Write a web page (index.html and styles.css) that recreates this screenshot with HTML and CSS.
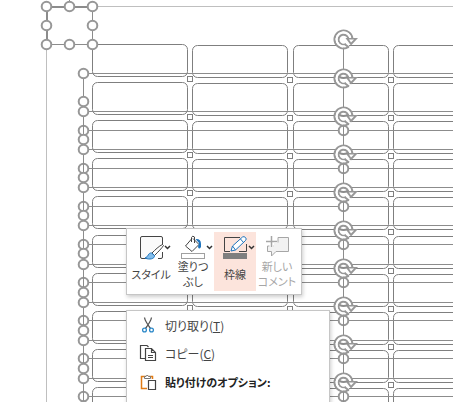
FILE: index.html
```
<!DOCTYPE html>
<html lang="ja">
<head>
  <meta charset="UTF-8">
  <meta name="viewport" content="width=device-width, initial-scale=1">
  <title>スライド</title>
  <link rel="stylesheet" href="styles.css">
</head>
<body>
  <main class="editor">
    <!-- Slide with the selected shapes -->
    <svg class="canvas" id="canvas" aria-hidden="true">
      <defs>
        <circle id="handle" r="4.8" class="handle"/>
        <g id="rotate">
          <circle r="8" fill="#fff"/>
          <path class="rotate-edge" d="M5 7.5 A9 9 0 1 1 9 0"/>
          <path class="rotate-edge" d="M2.5 4.5 A5 5 0 1 1 5 0"/>
          <path class="rotate-gap" d="M4 5.5 A7 7 0 1 1 7 0"/>
          <path class="rotate-head" d="M2 -1.500 H14.500 L7.500 6 Z"/>
          <path class="rotate-tip" d="M5.500 0 H10.500 L7.500 3 Z"/>
          <path class="rotate-edge" d="M1 4.500 L5.500 8"/>
        </g>
      </defs>
      <path class="slide-edge" d="M46.5 2000 V6.5 H3000"/>
    </svg>

    <div class="popup">
      <div class="toolbar" role="toolbar">
        <button type="button" class="tool">
          <svg class="tool-icon" viewBox="0 0 42 28">
            <path class="line" fill="#fafafa" d="M32.5 14 V6 Q32.5 4.5 31 4.5 H12 Q10.5 4.5 10.5 6 V25 Q10.5 26.5 12 26.5 H17 M28 26.5 H31 Q32.5 26.5 32.5 25 V20"/>
            <path fill="#fff" stroke="#444" d="M32.5 12.5 C29 14 25 18 22 21 L24.5 23.5 C28 20 32 16 33.5 13.5 Z"/>
            <path fill="#83beec" stroke="#1e74bd" d="M21.5 21 C18 20.5 18.5 25 15 26 C19 28 25 27 24.5 23.5 Z"/>
            <path class="chevron" d="M35 14 L37.5 16.5 L40 14"/>
          </svg>
          <span class="tool-label">スタイル</span>
        </button>
        <button type="button" class="tool">
          <svg class="tool-icon" viewBox="0 0 42 28">
            <path class="line" fill="#fff" d="M19.5 7 L13.5 14 L20 19.5 L27 12.5 L21 6.5"/>
            <path class="line" fill="none" d="M19.5 10 V5.5 Q20.5 3 22.5 5 V11"/>
            <path fill="#1e74bd" d="M23.5 7 Q29 6.5 29 12 V15 Q27 18 26 15 L27 11 Z"/>
            <rect x="9.5" y="21.5" width="23" height="5" fill="#fff" stroke="#a0a0a0"/>
            <path class="chevron" d="M35 14 L37.5 16.5 L40 14"/>
          </svg>
          <span class="tool-label">塗りつ<br>ぶし</span>
        </button>
        <button type="button" class="tool tool-active">
          <svg class="tool-icon" viewBox="0 0 42 28">
            <path fill="none" stroke="#444" d="M26 5.5 H10.5 V19.5 H16 M25 19.5 H32.5 V12"/>
            <path fill="#fff" stroke="#1e74bd" d="M17 19 L18.5 14 L28.5 5 Q30 4 31.5 5.5 Q33 7 31.5 8.5 L21.5 18 Z M26.5 7 L29.5 10.5 M18.5 14 L21.5 18"/>
            <rect x="9" y="21" width="24" height="6" fill="#7f7f7f"/>
            <path class="chevron" d="M35 14 L37.5 16.5 L40 14"/>
          </svg>
          <span class="tool-label">枠線</span>
        </button>
        <button type="button" class="tool" disabled>
          <svg class="tool-icon" viewBox="0 0 42 28">
            <path fill="#f2f2f2" stroke="#a6a6a6" d="M22 5.5 H32.5 V19.5 H20 L15.5 24 V19.5 H11.5 V14 H22 Z"/>
            <path fill="none" stroke="#fff" stroke-width="4" d="M15.5 4 V15 M10 9.5 H21"/>
            <path fill="none" stroke="#a6a6a6" stroke-width="1.5" d="M15.5 4 V15 M10 9.5 H21"/>
            <path fill="#f2f2f2" d="M18 10.5 H23 V15 H18 Z"/>
          </svg>
          <span class="tool-label">新しい<br>コメント</span>
        </button>
      </div>

      <div class="menu">
        <button type="button" class="menu-item">
          <svg class="menu-icon" viewBox="0 0 18 18">
            <path fill="none" stroke="#555" stroke-width="1.3" d="M5.5 1.5 Q6 5 11.5 12.5 M12.5 1.5 Q12 5 6.5 12.5"/>
            <circle cx="5.5" cy="14" r="1.9" fill="#fff" stroke="#2b88c8" stroke-width="1.3"/>
            <circle cx="12.5" cy="14" r="1.9" fill="#fff" stroke="#2b88c8" stroke-width="1.3"/>
          </svg>
          <span>切り取り(<u>T</u>)</span>
        </button>
        <button type="button" class="menu-item">
          <svg class="menu-icon" viewBox="0 0 18 18">
            <path fill="none" stroke="#444" stroke-width="1.2" d="M6 14.5 H1.5 V1.5 H8 L9.5 3"/>
            <path fill="#fff" stroke="#444" stroke-width="1.2" d="M6.5 4.5 H12.5 L16.5 8.5 V16.5 H6.5 Z M12.5 4.5 V8.5 H16.5 M9 11.5 H14 M9 13.5 H14"/>
          </svg>
          <span>コピー(<u>C</u>)</span>
        </button>
        <div class="menu-item menu-heading">
          <svg class="menu-icon" viewBox="0 0 18 18">
            <path fill="#fff" stroke="#e07b16" stroke-width="1.5" d="M8 15.5 H2.5 V3.5 H13.5 V6"/>
            <path fill="#fff" stroke="#777" d="M5.5 5.5 V3.5 H7 Q8 .5 9.5 3.5 H11.5 V5.5 Z"/>
            <path fill="#fff" stroke="#444" stroke-width="1.2" d="M9.5 7.5 H16.5 V16.5 H9.5 Z"/>
          </svg>
          <span>貼り付けのオプション:</span>
        </div>
      </div>
    </div>
  </main>

  <script src="canvas.js"></script>
</body>
</html>
```
FILE: styles.css
```
body {
  margin: 0;
  background: #fff;
  font-family: "Noto Sans CJK JP", sans-serif;
  font-size: 12px;
  color: #444;
}

.editor {
  position: relative;
  height: 100vh;
  overflow: hidden;
}

/* Slide */
.canvas {
  display: block;
  width: 100%;
  height: 100%;
}
.slide-edge {
  fill: none;
  stroke: #bfbfbf;
}
.card {
  fill: none;
  stroke: #7f7f7f;
}
.cell {
  fill: #fff;
  stroke: #7f7f7f;
}
.guide {
  fill: none;
  stroke: #8c8c8c;
}
.frame {
  fill: none;
  stroke: #8c8c8c;
  stroke-width: 2;
}
.handle {
  fill: #fff;
  stroke: #979797;
  stroke-width: 2;
}
.rotate-edge {
  fill: none;
  stroke: #979797;
  stroke-width: 2;
}
.rotate-gap {
  fill: none;
  stroke: #fff;
  stroke-width: 2;
}
.rotate-head {
  fill: #979797;
}
.rotate-tip {
  fill: #fff;
}

/* Floating toolbar and context menu */
.popup {
  position: absolute;
  top: 228px;
  left: 126px;
  display: flex;
  flex-direction: column;
  align-items: flex-start;
  gap: 15px;
}
.toolbar,
.menu {
  box-sizing: border-box;
  background: #fff;
  border: 1px solid #c6c6c6;
  box-shadow: 1px 2px 4px rgba(0, 0, 0, 0.2);
}
.toolbar {
  display: flex;
  padding: 3px;
}
.tool {
  display: flex;
  flex-direction: column;
  align-items: center;
  width: 42px;
  height: 59px;
  padding: 0;
  border: none;
  background: none;
  font: inherit;
  font-size: 11px;
  line-height: 15px;
  font-feature-settings: "palt";
  color: inherit;
}
.tool-active {
  background: #fce4dc;
}
.tool:disabled {
  color: #a6a6a6;
}
.tool-icon {
  flex: none;
  width: 42px;
  height: 28px;
}
.tool-label {
  display: flex;
  align-items: center;
  height: 28px;
  white-space: nowrap;
}
.line {
  stroke: #444;
}
.chevron {
  fill: none;
  stroke: #333;
  stroke-width: 1.5;
}

.menu {
  width: 204px;
  min-height: 200px;
}
.menu-item {
  display: flex;
  align-items: center;
  gap: 8px;
  width: 100%;
  height: 28px;
  padding: 0 12px;
  border: none;
  background: none;
  box-sizing: border-box;
  font: inherit;
  font-feature-settings: "palt";
  color: inherit;
}
.menu-heading {
  height: 30px;
  font-size: 11px;
  font-weight: bold;
  color: #222;
}
.menu-icon {
  flex: none;
  width: 18px;
  height: 18px;
}
```
FILE: canvas.js
```
const canvas = document.getElementById('canvas');
const pitch = 38.1;
const rows = 30;
const columns = 20;

function add(name, attrs) {
  const el = document.createElementNS('http://www.w3.org/2000/svg', name);
  for (const key in attrs) el.setAttribute(key, attrs[key]);
  canvas.appendChild(el);
}

function place(id, x, y) {
  add('use', { href: '#' + id, x: x + 0.5, y: y + 0.5 });
}

function rowY(start, row) {
  return Math.round(start + row * pitch);
}

// Label cards and the small cells between them
for (let row = 0; row < rows; row++) {
  for (let col = 0; col < columns; col++) {
    const x = Math.round(92 + col * 100.4);
    const y = rowY(44, row) + (col > 0 ? 1 : 0);
    add('rect', { class: 'card', x: x + 0.5, y: y + 0.5, width: 95, height: 32, rx: 5 });
    add('rect', { class: 'cell', x: x + 95.5, y: y + 32.5, width: 5, height: 5 });
  }
}

// Group outlines
for (let row = 0; row < rows; row++) {
  [rowY(73, row), rowY(129.5, row)].forEach(y => {
    add('line', { class: 'guide', x1: 83, x2: '100%', y1: y + 0.5, y2: y + 0.5 });
  });
  place('handle', 83, rowY(129.5, row));
  place('handle', 343, rowY(129.5, row));
}
add('line', { class: 'guide', x1: 83.5, x2: 83.5, y1: 73, y2: '100%' });
add('line', { class: 'guide', x1: 343.5, x2: 343.5, y1: 45, y2: '100%' });

for (let row = 0; row < rows; row++) {
  place('handle', 83, rowY(101, row));
  place('handle', 83, rowY(73, row));
  if (row > 0) place('rotate', 343, rowY(39.5, row));
}
place('rotate', 343, 39);

// Part of the hidden handle seen through each rotation arrow
for (let row = 1; row < rows; row++) {
  const y = rowY(39.5, row);
  add('path', { class: 'frame', d: `M339.5 ${y - 1} Q343.5 ${y + 1} 347.5 ${y - 1}` });
}

// Selected shape in the corner
add('path', { class: 'frame', d: 'M47 44 V7 H92' });
add('path', { class: 'guide', d: 'M92.5 7 V44.5 H47 M69.5 0 V6' });
[46, 69, 92].forEach(x => {
  [6, 25, 44].forEach(y => {
    if (x !== 69 || y !== 25) place('handle', x, y);
  });
});
```
